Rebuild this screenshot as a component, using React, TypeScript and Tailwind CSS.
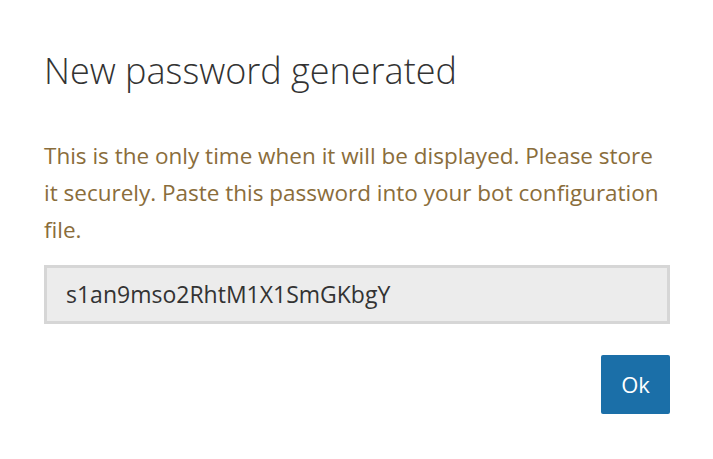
export default function App() {
  return (
    <div className="w-[713px] h-[459px] bg-white font-['Open_Sans',sans-serif]">
      <div className="pl-[44px] pr-[43px] pt-[47px]">
        <h1 className="text-[36px] leading-[48px] font-light text-[#333]">
          New password generated
        </h1>

        <p className="mt-[42px] text-[22.5px] leading-[37px] text-[#8a6d3b]">
          This is the only time when it will be displayed. Please store it securely. Paste this
          password into your bot configuration file.
        </p>

        <div className="mt-[17px] h-[59px] flex items-center pl-[19px] bg-[#ececec] border-[3px] border-[#d6d6d6] text-[23px] text-[#333]">
          s1an9mso2RhtM1X1SmGKbgY
        </div>

        <div className="mt-[31px] flex justify-end">
          <button className="w-[69px] h-[59px] bg-[#1b6fa8] text-white text-[22px] rounded-[2px]">
            Ok
          </button>
        </div>
      </div>
    </div>
  )
}
